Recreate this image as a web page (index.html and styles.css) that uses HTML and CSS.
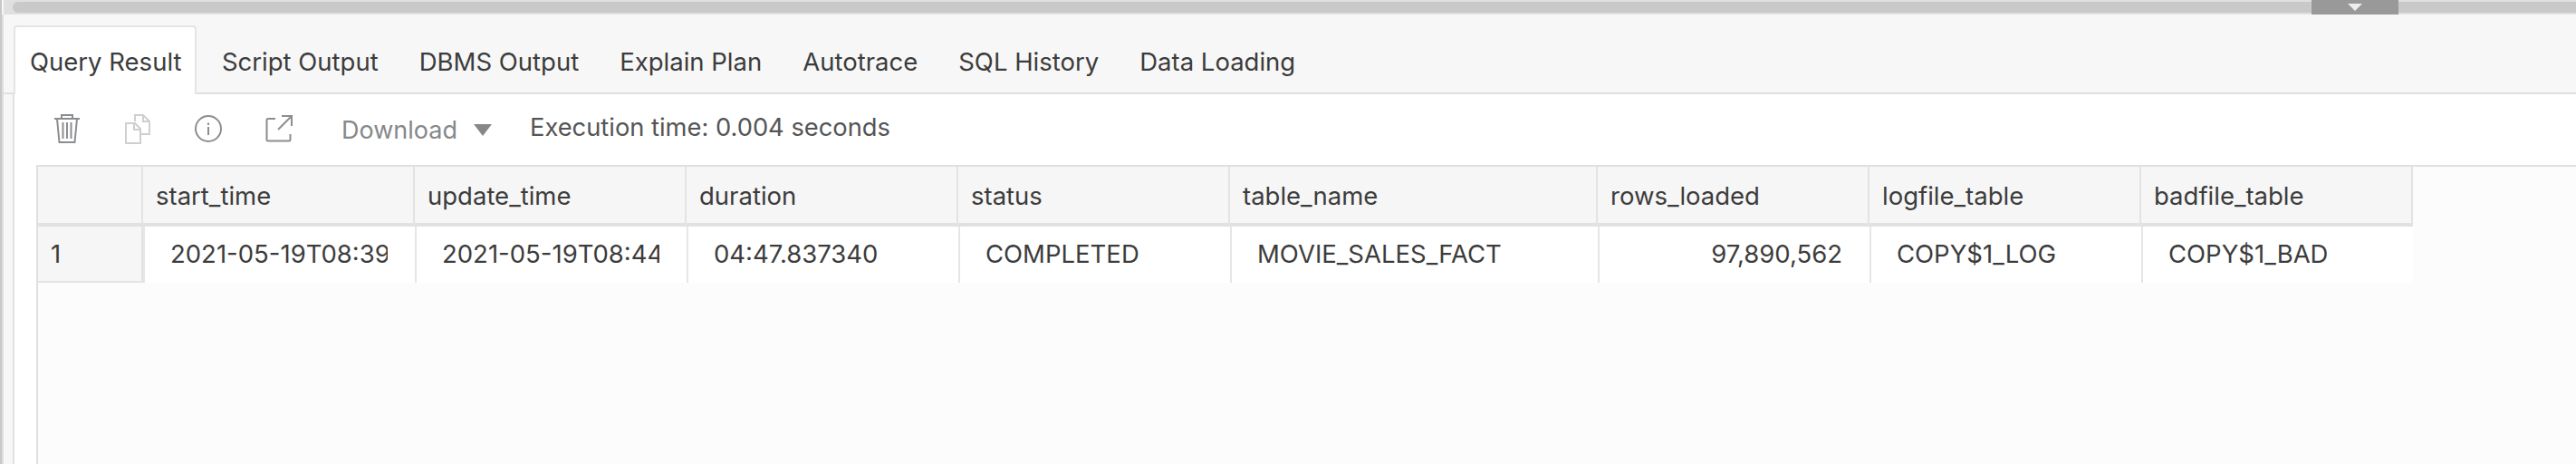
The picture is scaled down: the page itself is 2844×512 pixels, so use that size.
FILE: index.html
```html
<!DOCTYPE html>
<html lang="en">
<head>
<meta charset="utf-8">
<title>Query Result</title>
<link rel="stylesheet" href="styles.css">
</head>
<body>
<div class="app">
  <div class="splitter"><span class="handle"><i class="handle-arrow"></i></span><div class="splitter-track"></div></div>
  <div class="panel">
    <nav class="tabs">
      <a class="tab active">Query Result</a>
      <a class="tab">Script Output</a>
      <a class="tab">DBMS Output</a>
      <a class="tab">Explain Plan</a>
      <a class="tab">Autotrace</a>
      <a class="tab">SQL History</a>
      <a class="tab">Data Loading</a>
    </nav>
    <section class="content">
      <div class="toolbar">
        <span class="icon">
          <svg width="30" height="34" viewBox="0 0 30 34" fill="none" stroke="#8b8e90" stroke-width="2"><path d="M1 6h28M9 6V2h12v4M4 6l2.500 26h17L26 6M10.500 10v18M15 10v18M19.500 10v18"/></svg>
        </span>
        <span class="icon">
          <svg width="30" height="34" viewBox="0 0 30 34" fill="none" stroke="#cfcfcf" stroke-width="2"><path d="M12 9V2h9l7 7v14h-9M21 2v7h7M2 11h10l6 6v16H2zM11 11v7h7"/></svg>
        </span>
        <span class="icon">
          <svg width="30" height="34" viewBox="0 0 30 34" fill="none" stroke="#8b8e90" stroke-width="2"><circle cx="15" cy="17" r="14"/><path d="M15 15v9M15 10.500v2.500"/></svg>
        </span>
        <span class="icon">
          <svg width="30" height="34" viewBox="0 0 30 34" fill="none" stroke="#8b8e90" stroke-width="2"><path d="M11 6H3a1.500 1.500 0 0 0-1.500 1.500V29A1.500 1.500 0 0 0 3 30.500h23a1.500 1.500 0 0 0 1.500-1.500v-6M14 18L28 4M18 3h11v11"/></svg>
        </span>
        <span class="download">Download<i class="caret"></i></span>
        <span class="exec">Execution time: 0.004 seconds</span>
      </div>
      <div class="grid-wrap">
        <div class="grid">
          <div class="hd"></div>
          <div class="hd">start_time</div>
          <div class="hd">update_time</div>
          <div class="hd">duration</div>
          <div class="hd">status</div>
          <div class="hd">table_name</div>
          <div class="hd">rows_loaded</div>
          <div class="hd">logfile_table</div>
          <div class="hd">badfile_table</div>
          <div class="rownum">1</div>
          <div class="cell"><span class="clip">2021-05-19T08:39</span></div>
          <div class="cell"><span class="clip">2021-05-19T08:44</span></div>
          <div class="cell"><span class="clip">04:47.837340</span></div>
          <div class="cell"><span class="clip">COMPLETED</span></div>
          <div class="cell"><span class="clip">MOVIE_SALES_FACT</span></div>
          <div class="cell num"><span class="clip">97,890,562</span></div>
          <div class="cell"><span class="clip">COPY$1_LOG</span></div>
          <div class="cell"><span class="clip">COPY$1_BAD</span></div>
        </div>
      </div>
    </section>
  </div>
</div>
</body>
</html>
```
FILE: styles.css
```css
* { box-sizing: border-box; }
html, body { margin: 0; padding: 0; }
body {
  font-family: Inter, "Noto Sans", "Liberation Sans", sans-serif;
  font-size: 27.5px;
  color: #3c3c3c;
  background: #f7f7f7;
}
.app {
  height: 512px;
  overflow: hidden;
  display: flex;
  flex-direction: column;
  border-left: 2px solid #c8c8c8;
}
.splitter {
  position: relative;
  height: 16px;
  flex: none;
  margin-left: 2px;
  padding: 2px 0 2px 10px;
  background: #e0e0e0;
}
.splitter-track {
  height: 12px;
  background: #c9c9c9;
  border-radius: 6px 0 0 6px;
}
.handle {
  position: absolute;
  left: 2548px;
  top: 0;
  width: 96px;
  height: 16px;
  background: #999;
  display: flex;
  justify-content: center;
  padding-top: 4px;
}
.handle-arrow {
  width: 0;
  height: 0;
  border-left: 8px solid transparent;
  border-right: 8px solid transparent;
  border-top: 8px solid #eee;
}
.panel {
  flex: 1;
  min-height: 0;
  display: flex;
  flex-direction: column;
  border-left: 2px solid #dedede;
  background: #f7f7f7;
}
.tabs {
  height: 88px;
  flex: none;
  display: flex;
  align-items: flex-end;
  padding-left: 11px;
  border-bottom: 2px solid #e0e0e0;
}
.tab {
  height: 74px;
  padding: 2px 22.500px 0;
  display: flex;
  align-items: center;
  white-space: nowrap;
  margin-bottom: -2px;
}
.tab.active {
  background: #fff;
  height: 76px;
  padding: 2px 15px 0 16px;
  border: 2px solid #e4e4e4;
  border-bottom: 0;
  border-radius: 4px 4px 0 0;
  margin-right: 5px;
}
.content {
  flex: 1;
  min-height: 0;
  margin-left: 10px;
  background: #fff;
  border-left: 2px solid #e0e0e0;
  display: flex;
  flex-direction: column;
}
.toolbar {
  height: 78px;
  flex: none;
  display: flex;
  align-items: center;
  padding-left: 19px;
}
.icon {
  width: 78px;
  display: flex;
  justify-content: center;
  padding-bottom: 2px;
}
.icon svg { display: block; }
.download {
  margin-left: 30px;
  color: #85888a;
  display: flex;
  align-items: center;
  width: 208px;
  font-size: 27px;
}
.caret {
  margin-left: 18px;
  width: 0;
  height: 0;
  border-left: 10px solid transparent;
  border-right: 10px solid transparent;
  border-top: 13px solid #85888a;
}
.exec {
  color: #555;
  padding-bottom: 6px;
  font-size: 27.300px;
}
.grid-wrap {
  flex: 1;
  min-height: 0;
  margin-left: 24px;
  background: #fcfcfc;
  border-left: 2px solid #e0e0e0;
  border-top: 2px solid #e0e0e0;
}
.grid {
  display: grid;
  grid-template-columns: 116px repeat(4, 300px) 406px repeat(3, 300px);
  grid-template-rows: 66px 62px;
  width: 2622px;
}
.hd {
  background: #f6f6f6;
  border-right: 2px solid #e3e3e3;
  border-bottom: 4px solid #e0e2e2;
  padding: 2px 0 0 14px;
  display: flex;
  align-items: center;
  color: #3c3c3c;
}
.rownum {
  background: #f6f6f6;
  border-right: 2px solid #e3e3e3;
  border-bottom: 2px solid #e3e3e3;
  padding: 0 0 1px 14px;
  display: flex;
  align-items: center;
}
.cell {
  background: #fff;
  border-left: 2px solid #e6e6e6;
  padding: 0 30px 2px 28px;
  display: flex;
  align-items: center;
  color: #3c3c3c;
  min-width: 0;
}
.cell.num { justify-content: flex-end; }
.clip {
  overflow: hidden;
  white-space: nowrap;
}
```
